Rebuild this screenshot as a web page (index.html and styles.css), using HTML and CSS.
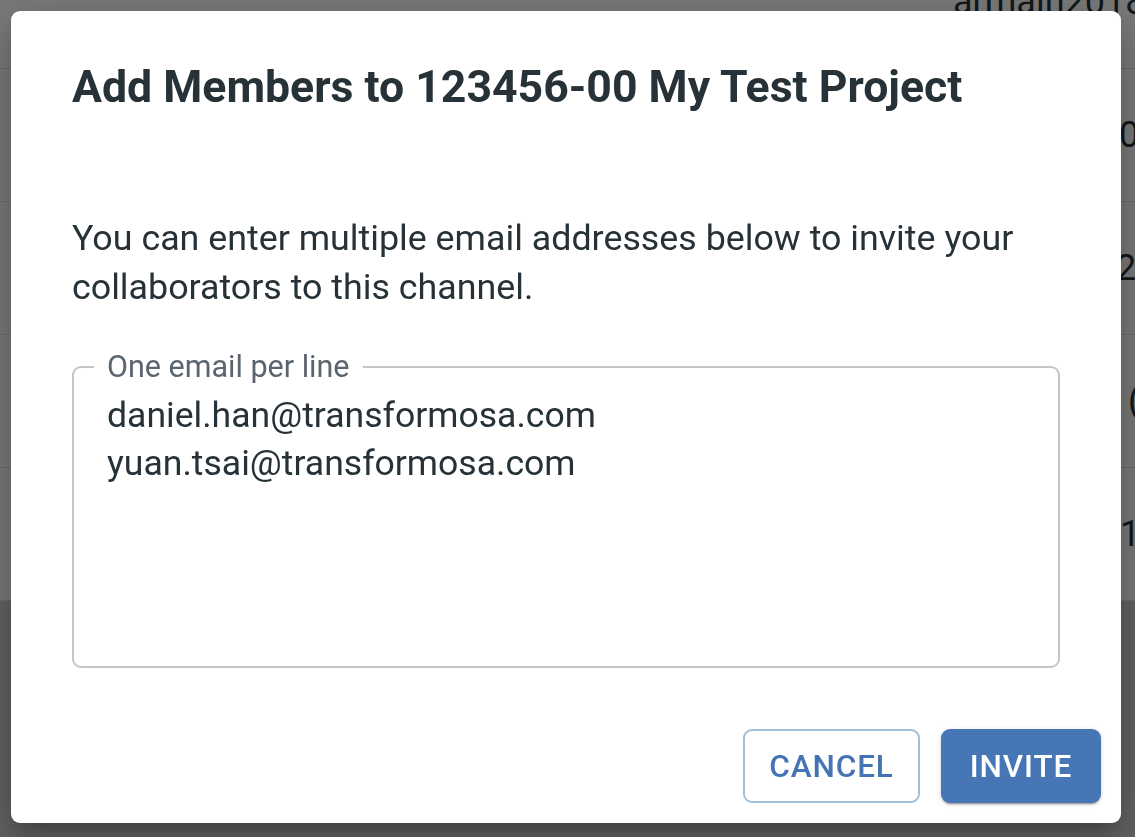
FILE: index.html
```html
<!DOCTYPE html>
<html lang="en">
<head>
<meta charset="utf-8">
<title>Add Members</title>
<link rel="stylesheet" href="styles.css">
</head>
<body>
<div class="page">
  <div class="table">
    <div class="row r0"><span class="cell">armain2018@gmail.com</span></div>
    <div class="row r1"><span class="cell">0</span></div>
    <div class="row r2"><span class="cell">24</span></div>
    <div class="row r3"><span class="cell">(</span></div>
    <div class="row r4"><span class="cell">1<span class="orange">(</span></span></div>
  </div>
</div>
<div class="overlay">
  <div class="dialog" role="dialog">
    <div class="content">
      <h2 class="title">Add Members to 123456-00 My Test Project</h2>
      <p class="desc">You can enter multiple email addresses below to invite your collaborators to this channel.</p>
      <fieldset class="field">
        <legend class="legend">One email per line</legend>
        <textarea class="emails" spellcheck="false">daniel.han@transformosa.com
yuan.tsai@transformosa.com</textarea>
      </fieldset>
    </div>
    <div class="actions">
      <button class="btn btn-outline">Cancel</button>
      <button class="btn btn-primary">Invite</button>
    </div>
  </div>
</div>
</body>
</html>
```
FILE: styles.css
```css
html, body {
  margin: 0;
  padding: 0;
  height: 100%;
  overflow: hidden;
}
body {
  font-family: Roboto, "Noto Sans", Arial, sans-serif;
  background: #ccced2;
  color: #263238;
}
.page {
  height: 601px;
  background: #ffffff;
  overflow: hidden;
}
.table {
  margin-top: -64px;
}
.row {
  height: 133px;
  border-bottom: 1px solid #e2e2e2;
  box-sizing: border-box;
  display: flex;
  align-items: center;
  font-size: 36px;
  white-space: nowrap;
  color: #263238;
}
.r0 .cell { margin-left: 953px; }
.r1 .cell { margin-left: 1119px; }
.r2 .cell { margin-left: 1116px; }
.r3 .cell { margin-left: 1128px; }
.r4 .cell { margin-left: 1120px; }
.orange { color: #e08a1e; margin-left: 8px; }

.overlay {
  position: fixed;
  inset: 0;
  background: rgba(0, 0, 0, 0.53);
  display: flex;
  align-items: flex-start;
}
.dialog {
  margin: 11px 0 0 11px;
  width: 1110px;
  background: #ffffff;
  border-radius: 9px;
  box-shadow: 0 11px 15px -7px rgba(0,0,0,0.2), 0 24px 38px 3px rgba(0,0,0,0.14), 0 9px 46px 8px rgba(0,0,0,0.12);
  padding: 49px 0 20px;
  box-sizing: border-box;
  display: flex;
  flex-direction: column;
}
.content {
  padding: 0 61px;
  display: flex;
  flex-direction: column;
}
.title {
  margin: 0;
  font-size: 44.6px;
  line-height: 54px;
  font-weight: 700;
  color: #263238;
  letter-spacing: 0;
}
.desc {
  margin: 100px 0 0;
  font-size: 35.8px;
  line-height: 49px;
  color: #263238;
}
.field {
  margin: 38px 0 0;
  padding: 0;
  border: 2px solid #c6c6c6;
  border-radius: 9px;
  height: 318px;
  box-sizing: border-box;
  display: flex;
  flex-direction: column;
  min-width: 0;
}
.legend {
  margin-left: 20px;
  padding: 0 13px;
  font-size: 30.5px;
  line-height: 34px;
  color: #5b6570;
}
.emails {
  flex: 1;
  border: none;
  outline: none;
  resize: none;
  overflow: hidden;
  background: transparent;
  font-family: inherit;
  font-size: 35.6px;
  line-height: 48px;
  color: #263238;
  padding: 7px 31px 0 33px;
  margin: 0;
}
.actions {
  margin-top: 61px;
  padding: 0 20px;
  display: flex;
  justify-content: flex-end;
  gap: 21px;
}
.btn {
  height: 74px;
  border-radius: 9px;
  font-family: inherit;
  font-size: 31.5px;
  font-weight: 500;
  letter-spacing: 0.9px;
  text-transform: uppercase;
  box-sizing: border-box;
  cursor: pointer;
  padding: 0;
}
.btn-outline {
  width: 177px;
  background: #ffffff;
  color: #4574b4;
  border: 2px solid #a3bcdd;
}
.btn-primary {
  width: 160px;
  background: #4676b6;
  color: #ffffff;
  border: none;
  box-shadow: 0 3px 1px -2px rgba(0,0,0,0.2), 0 2px 2px 0 rgba(0,0,0,0.14), 0 1px 5px 0 rgba(0,0,0,0.12);
}
```
